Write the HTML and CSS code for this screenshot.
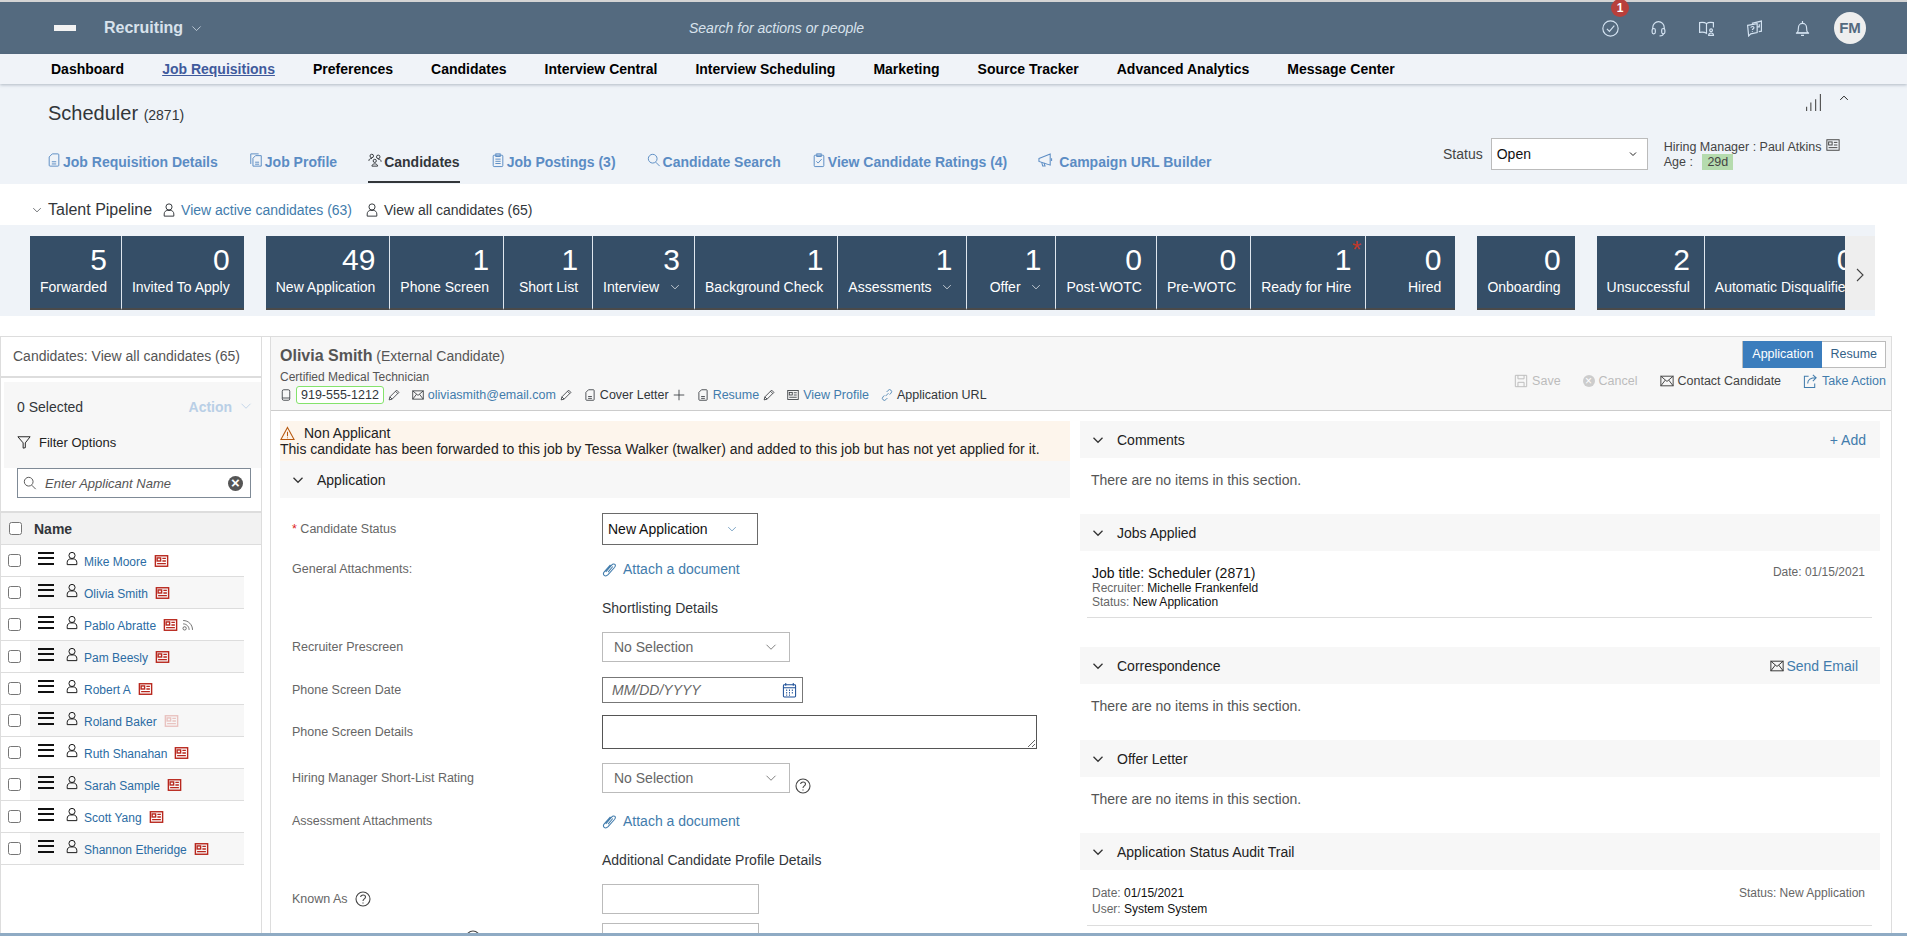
FILE: index.html
```html
<!DOCTYPE html>
<html lang="en">
<head>
    <meta charset="UTF-8">
    <meta name="viewport" content="width=device-width, initial-scale=1.0">
    <title>Recruiting - Scheduler</title>
    <link rel="stylesheet" href="styles.css">
</head>
<body>
    <svg class="sprite" xmlns="http://www.w3.org/2000/svg">
        <symbol id="i-chev" viewBox="0 0 16 16"><path d="M2 5l6 6 6-6"/></symbol>
        <symbol id="i-check" viewBox="0 0 16 16"><circle cx="8" cy="8" r="7.2"/><path d="M4.6 8.4l2.4 2.4 4.6-5.4"/></symbol>
        <symbol id="i-headset" viewBox="0 0 16 16"><path d="M2.6 9V7a5.4 5.4 0 0 1 10.8 0v2"/><rect x="2" y="8" width="3" height="5" rx="1.4"/><rect x="11" y="8" width="3" height="5" rx="1.4"/><path d="M12.5 13c0 1.4-1.2 2-3.5 2"/></symbol>
        <symbol id="i-book" viewBox="0 0 16 16"><path d="M8 3.4C6.6 2.2 4 2 1.5 2.4v9.2c2.400-.4 5 -.2 6.500 1V3.400zM8 3.400C9.400 2.200 12 2 14.500 2.400V7"/><circle cx="12.300" cy="9.700" r="1.300"/><path d="M10 14.500c0-3 4.600-3 4.600 0z"/></symbol>
        <symbol id="i-chat" viewBox="0 0 16 16"><path d="M5.500 3.200L14.500 1v9.500l-2.500.5"/><path d="M1.500 5l9-1.600v8.400L4.500 13l-2 2z"/><path d="M4.500 7.200c.4-1.400 3-1.400 3 0 0 1-1.500 1-1.500 2.200M6 10.700v.5M10.500 6.500h2M12.500 4v3"/></symbol>
        <symbol id="i-bell" viewBox="0 0 16 16"><path d="M3 12c1.200-1.400 1.200-3 1.200-5a3.800 3.800 0 0 1 7.600 0c0 2 0 3.600 1.200 5z"/><path d="M1.800 12.400h12.400M6.600 14.500h2.800M8 1v2"/></symbol>
        <symbol id="i-doc" viewBox="0 0 16 16"><path d="M6 1h6.500a1 1 0 0 1 1 1v12a1 1 0 0 1-1 1h-9a1 1 0 0 1-1-1V4.500z"/><path d="M5.500 10h5M5.500 12.500h5"/></symbol>
        <symbol id="i-docs" viewBox="0 0 16 16"><path d="M2 12.500V1h9"/><path d="M7.500 3h6.500v12H4.500V6z"/><path d="M7 10.500h4.500M7 12.800h4.500"/></symbol>
        <symbol id="i-people" viewBox="0 0 16 16"><circle cx="4.300" cy="3.400" r="2"/><circle cx="11.700" cy="4.400" r="2"/><circle cx="7.700" cy="9" r="1.800"/><path d="M1 9c0-2 1.500-2.800 3.500-2.800M15 10c0-2-1.200-3-3.500-3M4.500 15c0-3.500 6.500-3.500 6.500 0z"/></symbol>
        <symbol id="i-clip" viewBox="0 0 16 16"><rect x="2.500" y="2.500" width="11" height="13" rx="1"/><rect x="5.500" y="1" width="5" height="3"/><path d="M5 7h6M5 9.500h6M5 12h6"/></symbol>
        <symbol id="i-search" viewBox="0 0 16 16"><circle cx="6.500" cy="6.500" r="5"/><path d="M10 10.500l4.500 4.500"/></symbol>
        <symbol id="i-rate" viewBox="0 0 16 16"><rect x="2.500" y="2.500" width="11" height="13" rx="1"/><rect x="5.500" y="1" width="5" height="3"/><path d="M5 9.500l2 2 4-4.500"/></symbol>
        <symbol id="i-horn" viewBox="0 0 16 16"><path d="M1 6.500L13 1.500v12L1 9.500z"/><path d="M4 10.500l1 4h2.500l-1-3.400M14.500 6v3"/></symbol>
        <symbol id="i-person" viewBox="0 0 16 16"><circle cx="8" cy="4.500" r="3.500"/><path d="M2.500 15v-2.500c0-2.500 2-4 3.500-4h4c1.500 0 3.500 1.500 3.500 4V15z"/></symbol>
        <symbol id="i-bars" viewBox="0 0 16 16"><path d="M1.500 16v-4M5.500 16V8M10 16V5M14.500 16V0"/></symbol>
        <symbol id="i-card" viewBox="0 0 16 16"><rect x="1" y="2" width="14" height="12"/><rect x="3" y="4.500" width="4" height="3.500"/><path d="M9 5h4M9 8h4M3 11h10"/></symbol>
        <symbol id="i-filter" viewBox="0 0 16 16"><path d="M1 2h14L9.500 9v5.500L7 15V9z"/></symbol>
        <symbol id="i-phone" viewBox="0 0 16 16"><rect x="3" y="1" width="10" height="14" rx="2"/><path d="M3 12h10"/></symbol>
        <symbol id="i-pencil" viewBox="0 0 16 16"><path d="M1.500 14.500l1-4L11.500 1.500l3 3-9 9zM2.500 10.500l3 3M10 3l3 3"/></symbol>
        <symbol id="i-mail" viewBox="0 0 16 16"><rect x="1" y="2.500" width="14" height="11"/><path d="M1 2.500l7 6 7-6M1 13.500l5-6.500M15 13.500l-5-6.500"/></symbol>
        <symbol id="i-plus" viewBox="0 0 16 16"><path d="M8 1v14M1 8h14"/></symbol>
        <symbol id="i-link" viewBox="0 0 16 16"><path d="M6 9.500l4-4M7.500 4l2-2.200a2.500 2.500 0 0 1 4 3.500L11.500 7.500M8.500 12l-2 2.200a2.500 2.500 0 0 1-4-3.500L4.500 8.500"/></symbol>
        <symbol id="i-warn" viewBox="0 0 16 16"><path d="M8 1.500L15 14.500H1z"/><path d="M8 6v5M8 12.300v.8"/></symbol>
        <symbol id="i-attach" viewBox="0 0 16 16"><path d="M4 10.500l6.500-7.500c1-1.200 2.700-1.200 3.300-.5s.5 2.200-.5 3.400L6.500 13.500c-1.500 1.500-3.300 1.500-4.200.7s-1-2.500.3-4L9 3M6.500 10.800l5-6"/></symbol>
        <symbol id="i-cal" viewBox="0 0 16 16"><rect x="1.500" y="2.500" width="13" height="13" rx="1"/><path d="M1.500 5.500h13M4 .5v3M12 .5v3"/><path class="dots" d="M4.500 8.300h1M7.500 8.300h1M10.500 8.300h1M4.500 11h1M7.500 11h1M10.500 11h1M4.500 13.500h1M7.500 13.500h1"/></symbol>
        <symbol id="i-help" viewBox="0 0 16 16"><circle cx="8" cy="8" r="7"/><path d="M5.600 6c.3-2.700 4.900-2.700 4.900 0 0 1.900-2.500 1.800-2.500 4M8 11.500v1"/></symbol>
        <symbol id="i-save" viewBox="0 0 16 16"><path d="M1.500 1.500h13v13h-13z"/><path d="M4.500 1.500v4h7v-4M4.500 14.500v-5h7v5"/></symbol>
        <symbol id="i-share" viewBox="0 0 16 16"><path d="M6 2.500H1.500v12h11V10"/><path d="M5 10c0-4 3-6 9-6M10.500 1l3.500 3-3.500 3.500"/></symbol>
        <symbol id="i-rss" viewBox="0 0 16 16"><circle cx="3.500" cy="12.500" r="2.200"/><path d="M1.500 6.500c4.500 0 8 3.500 8 8M1.500 2c7 0 12.500 5.500 12.500 12.500"/></symbol>
    </svg>

    <header class="shell">
        <div class="brand">
            <span class="logo"></span>
            <span class="app-name">Recruiting</span>
            <svg class="ic chev-sm"><use href="#i-chev"/></svg>
        </div>
        <div class="shell-search">Search for actions or people</div>
        <div class="shell-icons">
            <span class="shell-ic">
                <svg class="ic"><use href="#i-check"/></svg>
                <span class="badge">1</span>
            </span>
            <span class="shell-ic"><svg class="ic"><use href="#i-headset"/></svg></span>
            <span class="shell-ic"><svg class="ic"><use href="#i-book"/></svg></span>
            <span class="shell-ic"><svg class="ic"><use href="#i-chat"/></svg></span>
            <span class="shell-ic"><svg class="ic"><use href="#i-bell"/></svg></span>
            <span class="avatar">FM</span>
        </div>
    </header>

    <nav class="topnav">
        <a>Dashboard</a>
        <a class="current">Job Requisitions</a>
        <a>Preferences</a>
        <a>Candidates</a>
        <a>Interview Central</a>
        <a>Interview Scheduling</a>
        <a>Marketing</a>
        <a>Source Tracker</a>
        <a>Advanced Analytics</a>
        <a>Message Center</a>
    </nav>

    <section class="job-head">
        <div class="job-title">
            <h1>Scheduler <small>(2871)</small></h1>
            <div class="job-tools">
                <svg class="ic"><use href="#i-bars"/></svg>
                <svg class="ic up"><use href="#i-chev"/></svg>
            </div>
        </div>
        <div class="tab-row">
            <a class="tab"><svg class="ic"><use href="#i-doc"/></svg>Job Requisition Details</a>
            <a class="tab"><svg class="ic"><use href="#i-docs"/></svg>Job Profile</a>
            <a class="tab active"><svg class="ic"><use href="#i-people"/></svg>Candidates</a>
            <a class="tab"><svg class="ic"><use href="#i-clip"/></svg>Job Postings (3)</a>
            <a class="tab"><svg class="ic"><use href="#i-search"/></svg>Candidate Search</a>
            <a class="tab"><svg class="ic"><use href="#i-rate"/></svg>View Candidate Ratings (4)</a>
            <a class="tab"><svg class="ic wide"><use href="#i-horn"/></svg>Campaign URL Builder</a>
            <div class="job-meta">
                <span class="status-label">Status</span>
                <div class="select status-select">Open<svg class="ic"><use href="#i-chev"/></svg></div>
                <div class="hiring">
                    <div>Hiring Manager : Paul Atkins <svg class="ic"><use href="#i-card"/></svg></div>
                    <div>Age : <span class="age">29d</span></div>
                </div>
            </div>
        </div>
    </section>

    <div class="pipeline-links">
        <svg class="ic pipe-chev"><use href="#i-chev"/></svg>
        <span class="pipe-title">Talent Pipeline</span>
        <svg class="ic"><use href="#i-person"/></svg>
        <a class="blue">View active candidates (63)</a>
        <svg class="ic second"><use href="#i-person"/></svg>
        <span>View all candidates (65)</span>
    </div>

    <section class="pipeline">
        <div class="pipe-scroll">
            <div class="tiles">
                <div class="tile"><b>5</b><span>Forwarded</span></div>
                <div class="tile"><b>0</b><span>Invited To Apply</span></div>
            </div>
            <div class="tiles">
                <div class="tile"><b>49</b><span>New Application</span></div>
                <div class="tile"><b>1</b><span>Phone Screen</span></div>
                <div class="tile"><b>1</b><span>Short List</span></div>
                <div class="tile"><b>3</b><span>Interview <svg class="ic"><use href="#i-chev"/></svg></span></div>
                <div class="tile"><b>1</b><span>Background Check</span></div>
                <div class="tile"><b>1</b><span>Assessments <svg class="ic"><use href="#i-chev"/></svg></span></div>
                <div class="tile"><b>1</b><span>Offer <svg class="ic"><use href="#i-chev"/></svg></span></div>
                <div class="tile"><b>0</b><span>Post-WOTC</span></div>
                <div class="tile"><b>0</b><span>Pre-WOTC</span></div>
                <div class="tile"><b>1</b><i class="star">*</i><span>Ready for Hire</span></div>
                <div class="tile"><b>0</b><span>Hired</span></div>
            </div>
            <div class="tiles">
                <div class="tile"><b>0</b><span>Onboarding</span></div>
            </div>
            <div class="tiles">
                <div class="tile"><b>2</b><span>Unsuccessful</span></div>
                <div class="tile"><b>0</b><span>Automatic Disqualified</span></div>
                <div class="tile"><b>0</b><span>Rejected</span></div>
            </div>
        </div>
        <button class="pipe-next"><svg class="ic"><use href="#i-chev"/></svg></button>
    </section>

    <main class="workspace">
        <aside class="cand-list">
            <div class="cand-head">Candidates: View all candidates (65)</div>
            <div class="cand-tools">
                <div class="cand-sel">
                    <span>0 Selected</span>
                    <span class="action">Action <svg class="ic"><use href="#i-chev"/></svg></span>
                </div>
                <div class="cand-filter"><svg class="ic"><use href="#i-filter"/></svg>Filter Options</div>
            </div>
            <div class="cand-search">
                <svg class="ic"><use href="#i-search"/></svg>
                <span>Enter Applicant Name</span>
                <span class="clear">&times;</span>
            </div>
            <div class="cand-th"><input type="checkbox"><span>Name</span></div>
            <div class="cand-row"><input type="checkbox"><div class="cand-cell"><span class="burger"></span><svg class="ic"><use href="#i-person"/></svg><a>Mike Moore</a><svg class="ic res"><use href="#i-card"/></svg></div></div>
            <div class="cand-row"><input type="checkbox"><div class="cand-cell"><span class="burger"></span><svg class="ic"><use href="#i-person"/></svg><a>Olivia Smith</a><svg class="ic res"><use href="#i-card"/></svg></div></div>
            <div class="cand-row"><input type="checkbox"><div class="cand-cell"><span class="burger"></span><svg class="ic"><use href="#i-person"/></svg><a>Pablo Abratte</a><svg class="ic res"><use href="#i-card"/></svg><svg class="ic rss"><use href="#i-rss"/></svg></div></div>
            <div class="cand-row"><input type="checkbox"><div class="cand-cell"><span class="burger"></span><svg class="ic"><use href="#i-person"/></svg><a>Pam Beesly</a><svg class="ic res"><use href="#i-card"/></svg></div></div>
            <div class="cand-row"><input type="checkbox"><div class="cand-cell"><span class="burger"></span><svg class="ic"><use href="#i-person"/></svg><a>Robert A</a><svg class="ic res"><use href="#i-card"/></svg></div></div>
            <div class="cand-row"><input type="checkbox"><div class="cand-cell"><span class="burger"></span><svg class="ic"><use href="#i-person"/></svg><a>Roland Baker</a><svg class="ic res faded"><use href="#i-card"/></svg></div></div>
            <div class="cand-row"><input type="checkbox"><div class="cand-cell"><span class="burger"></span><svg class="ic"><use href="#i-person"/></svg><a>Ruth Shanahan</a><svg class="ic res"><use href="#i-card"/></svg></div></div>
            <div class="cand-row"><input type="checkbox"><div class="cand-cell"><span class="burger"></span><svg class="ic"><use href="#i-person"/></svg><a>Sarah Sample</a><svg class="ic res"><use href="#i-card"/></svg></div></div>
            <div class="cand-row"><input type="checkbox"><div class="cand-cell"><span class="burger"></span><svg class="ic"><use href="#i-person"/></svg><a>Scott Yang</a><svg class="ic res"><use href="#i-card"/></svg></div></div>
            <div class="cand-row"><input type="checkbox"><div class="cand-cell"><span class="burger"></span><svg class="ic"><use href="#i-person"/></svg><a>Shannon Etheridge</a><svg class="ic res"><use href="#i-card"/></svg></div></div>
        </aside>

        <section class="detail">
            <div class="detail-head">
                <div class="who">
                    <div class="who-name"><b>Olivia Smith</b> (External Candidate)</div>
                    <div class="who-job">Certified Medical Technician</div>
                    <div class="who-links">
                        <svg class="ic"><use href="#i-phone"/></svg>
                        <span class="phone">919-555-1212</span>
                        <svg class="ic"><use href="#i-pencil"/></svg>
                        <svg class="ic gap-l"><use href="#i-mail"/></svg>
                        <a class="blue">oliviasmith@email.com</a>
                        <svg class="ic"><use href="#i-pencil"/></svg>
                        <svg class="ic gap-l"><use href="#i-doc"/></svg>
                        <span>Cover Letter</span>
                        <svg class="ic"><use href="#i-plus"/></svg>
                        <svg class="ic gap-l"><use href="#i-doc"/></svg>
                        <a class="blue">Resume</a>
                        <svg class="ic"><use href="#i-pencil"/></svg>
                        <svg class="ic gap-l"><use href="#i-card"/></svg>
                        <a class="blue">View Profile</a>
                        <svg class="ic gap-l blue"><use href="#i-link"/></svg>
                        <span>Application URL</span>
                    </div>
                </div>
                <div class="detail-actions">
                    <div class="toggle"><span class="on">Application</span><span>Resume</span></div>
                    <div class="toolbar">
                        <span class="off"><svg class="ic"><use href="#i-save"/></svg>Save</span>
                        <span class="off"><span class="off-x">&times;</span>Cancel</span>
                        <span><svg class="ic"><use href="#i-mail"/></svg>Contact Candidate</span>
                        <a class="blue"><svg class="ic big"><use href="#i-share"/></svg>Take Action</a>
                    </div>
                </div>
            </div>

            <div class="detail-body">
                <div class="app-col">
                    <div class="notice">
                        <div class="notice-title"><svg class="ic"><use href="#i-warn"/></svg>Non Applicant</div>
                        <div>This candidate has been forwarded to this job by Tessa Walker (twalker) and added to this job but has not yet applied for it.</div>
                    </div>
                    <div class="sec-head"><svg class="ic"><use href="#i-chev"/></svg>Application</div>
                    <div class="form">
                        <div class="frow r-status">
                            <label><i>*</i> Candidate Status</label>
                            <div class="select dark">New Application<svg class="ic blue"><use href="#i-chev"/></svg></div>
                        </div>
                        <div class="frow r-attach">
                            <label>General Attachments:</label>
                            <a class="attach"><svg class="ic"><use href="#i-attach"/></svg>Attach a document</a>
                        </div>
                        <div class="frow r-sub"><label></label><span class="sub">Shortlisting Details</span></div>
                        <div class="frow r-sel1">
                            <label>Recruiter Prescreen</label>
                            <div class="select none">No Selection<svg class="ic"><use href="#i-chev"/></svg></div>
                        </div>
                        <div class="frow r-date">
                            <label>Phone Screen Date</label>
                            <div class="date-box"><span>MM/DD/YYYY</span><svg class="ic"><use href="#i-cal"/></svg></div>
                        </div>
                        <div class="frow r-text">
                            <label>Phone Screen Details</label>
                            <textarea></textarea>
                        </div>
                        <div class="frow r-sel2">
                            <label>Hiring Manager Short-List Rating</label>
                            <div class="select none">No Selection<svg class="ic"><use href="#i-chev"/></svg></div>
                            <svg class="ic help drop"><use href="#i-help"/></svg>
                        </div>
                        <div class="frow r-attach2">
                            <label>Assessment Attachments</label>
                            <a class="attach"><svg class="ic"><use href="#i-attach"/></svg>Attach a document</a>
                        </div>
                        <div class="frow r-sub2"><label></label><span class="sub">Additional Candidate Profile Details</span></div>
                        <div class="frow r-known">
                            <label>Known As <svg class="ic help"><use href="#i-help"/></svg></label>
                            <input type="text" class="plain">
                        </div>
                        <div class="frow r-other">
                            <label>If Other State (please specify) <svg class="ic help"><use href="#i-help"/></svg></label>
                            <input type="text" class="plain">
                        </div>
                    </div>
                </div>

                <div class="side-col">
                    <div class="sec-head"><svg class="ic"><use href="#i-chev"/></svg>Comments<a class="sec-link">+ Add</a></div>
                    <p class="empty">There are no items in this section.</p>
                    <div class="sec-head"><svg class="ic"><use href="#i-chev"/></svg>Jobs Applied</div>
                    <div class="job-entry">
                        <div class="entry-main">
                            <div class="entry-title">Job title: Scheduler (2871)</div>
                            <div><em>Recruiter:</em> Michelle Frankenfeld</div>
                            <div><em>Status:</em> New Application</div>
                        </div>
                        <em>Date: 01/15/2021</em>
                    </div>
                    <div class="sec-head"><svg class="ic"><use href="#i-chev"/></svg>Correspondence<a class="sec-link send"><svg class="ic"><use href="#i-mail"/></svg>Send Email</a></div>
                    <p class="empty">There are no items in this section.</p>
                    <div class="sec-head"><svg class="ic"><use href="#i-chev"/></svg>Offer Letter</div>
                    <p class="empty">There are no items in this section.</p>
                    <div class="sec-head"><svg class="ic"><use href="#i-chev"/></svg>Application Status Audit Trail</div>
                    <div class="audit-entry">
                        <div class="entry-main">
                            <div><em>Date:</em> 01/15/2021</div>
                            <div><em>User:</em> System System</div>
                        </div>
                        <em>Status: New Application</em>
                    </div>
                </div>
            </div>
        </section>
    </main>
    <div class="edge"></div>
</body>
</html>
```

FILE: styles.css
```css
* {
    box-sizing: border-box;
}
html, body {
    height: 936px;
    overflow: hidden;
}
body {
    margin: 0;
    background-color: #fff;
    color: #32363a;
    font-family: "Liberation Sans", Arial, sans-serif;
    font-size: 14px;
    position: relative;
}
a {
    text-decoration: none;
}
.sprite {
    display: none;
}
.ic {
    width: 14px;
    height: 14px;
    fill: none;
    stroke: currentColor;
    stroke-width: 1.1;
    flex: none;
}
.blue {
    color: #427cac;
}

/* shell bar */
.shell {
    height: 54px;
    border-top: 2px solid #d4d4d4;
    background-color: #546a7f;
    display: flex;
    align-items: center;
    color: #d8e2ec;
}
.brand {
    width: 689px;
    padding-left: 54px;
    display: flex;
    align-items: center;
}
.logo {
    width: 22px;
    height: 6px;
    background-color: #f2f2f2;
    margin-right: 28px;
}
.app-name {
    font-size: 16px;
    font-weight: bold;
}
.chev-sm {
    width: 11px;
    height: 11px;
    margin-left: 8px;
}
.shell-search {
    font-size: 14px;
    font-style: italic;
}
.shell-icons {
    margin-left: auto;
    padding-right: 41px;
    display: flex;
    align-items: center;
}
.shell-ic {
    width: 48px;
    display: flex;
    justify-content: center;
    position: relative;
    color: #d4e3f2;
}
.shell-ic .ic {
    width: 17px;
    height: 17px;
}
.badge {
    position: absolute;
    left: 25px;
    top: -21px;
    width: 18px;
    height: 18px;
    border-radius: 50%;
    background-color: #b8403c;
    color: #fff;
    font-size: 12px;
    font-weight: bold;
    line-height: 18px;
    text-align: center;
}
.avatar {
    width: 32px;
    height: 32px;
    margin-left: 8px;
    border-radius: 50%;
    background-color: #eeeeee;
    color: #546a7f;
    font-weight: bold;
    font-size: 15px;
    line-height: 32px;
    text-align: center;
}

/* main nav */
.topnav {
    height: 30px;
    padding-left: 51px;
    display: flex;
    gap: 38px;
    align-items: center;
    background-color: #f0f3f8;
    box-shadow: 0 1px 3px rgba(60, 80, 100, 0.35);
    position: relative;
    font-weight: bold;
    color: #000;
}
.topnav .current {
    color: #3f5a9c;
    text-decoration: underline;
}

/* job header */
.job-head {
    height: 100px;
    background-color: #eff3f8;
}
.job-title {
    height: 58px;
    padding-left: 48px;
    display: flex;
    align-items: center;
    position: relative;
}
.job-title h1 {
    margin: 0;
    font-size: 20px;
    font-weight: normal;
    color: #32363a;
}
.job-title small {
    font-size: 14px;
}
.job-tools {
    position: absolute;
    left: 1805px;
    top: 10px;
    display: flex;
    gap: 14px;
    color: #555;
}
.job-tools .ic {
    width: 17px;
    height: 17px;
}
.job-tools .up {
    width: 16px;
    height: 10px;
    margin-top: -1px;
    transform: scaleY(-1);
    stroke-width: 1.6;
    color: #222;
}
.tab-row {
    height: 42px;
    padding-left: 47px;
    display: flex;
    gap: 31px;
    align-items: flex-start;
}
.tab {
    height: 41px;
    display: flex;
    align-items: center;
    gap: 2px;
    color: #5b8cc4;
    font-weight: bold;
    border-bottom: 2px solid transparent;
}
.tab .ic {
    width: 14px;
    height: 16px;
    margin-top: -3px;
}
.tab .wide {
    width: 15px;
    margin-right: 4px;
}
.tab.active {
    color: #32363a;
    border-bottom-color: #32363a;
}
.job-meta {
    position: absolute;
    left: 1443px;
    top: 138px;
    display: flex;
    align-items: flex-start;
}
.status-label {
    margin: 8px 8px 0 0;
    color: #444;
}
.select {
    height: 30px;
    display: flex;
    align-items: center;
    justify-content: space-between;
    background-color: #fff;
    border: 1px solid #bbb;
    color: #555;
}
.select .ic {
    width: 12px;
    height: 12px;
}
.status-select {
    width: 157px;
    height: 32px;
    padding: 0 10px 0 5px;
    color: #111;
}
.status-select .ic {
    width: 8px;
    height: 8px;
    stroke-width: 2;
    color: #222;
}
.hiring {
    margin-left: 16px;
    font-size: 12.5px;
    line-height: 15px;
    color: #444;
}
.hiring .ic {
    width: 16px;
    height: 14px;
    vertical-align: -1px;
}
.age {
    background-color: #b5dbae;
    padding: 1px 5px;
    margin-left: 6px;
}

/* pipeline */
.pipeline-links {
    height: 41px;
    padding: 10px 0 0 32px;
    display: flex;
    align-items: center;
    gap: 5px;
    font-size: 14px;
}
.pipeline-links .pipe-chev {
    width: 10px;
    height: 10px;
    margin-right: 1px;
}
.pipe-title {
    font-size: 16px;
    margin-right: 5px;
}
.pipeline-links .second {
    margin-left: 8px;
}
.pipeline {
    width: 1875px;
    height: 91px;
    padding: 11px 0 6px 30px;
    background-color: #eff3f8;
    display: flex;
}
.pipe-scroll {
    width: 1815px;
    display: flex;
    gap: 22px;
    overflow: hidden;
}
.tiles {
    display: flex;
    flex: none;
}
.tile {
    min-width: 89px;
    padding: 7px 14px 0 10px;
    background-color: #354e67;
    border-right: 1px solid #dfe6ee;
    border-bottom: 2px solid #4a4a4a;
    color: #fff;
    text-align: right;
    position: relative;
}
.tile:last-child {
    border-right: 0;
}
.tile b {
    display: block;
    font-size: 30px;
    font-weight: normal;
    line-height: 34px;
}
.tile span {
    display: block;
    margin-top: 2px;
    white-space: nowrap;
    text-align: right;
}
.tile .ic {
    width: 10px;
    height: 10px;
    margin-left: 7px;
}
.star {
    position: absolute;
    top: 0;
    right: 4px;
    color: #c0392b;
    font-size: 24px;
    font-style: normal;
}
.pipe-next {
    width: 30px;
    padding: 0;
    border: 0;
    background-color: #eeeeee;
    color: #444;
}
.pipe-next .ic {
    width: 16px;
    height: 16px;
    transform: rotate(-90deg);
    margin-top: 6px;
}

/* workspace */
.workspace {
    margin-top: 20px;
    height: 598px;
    width: 1892px;
    display: flex;
    border-top: 1px solid #ddd;
    overflow: hidden;
}
.cand-list {
    width: 262px;
    flex: none;
    border-left: 1px solid #ddd;
    border-right: 1px solid #ddd;
}
.cand-head {
    height: 41px;
    padding: 11px 0 0 12px;
    color: #555;
    border-bottom: 2px solid #ddd;
}
.cand-tools {
    height: 86px;
    margin: 4px 0 0 3px;
    padding: 0 9px 0 13px;
    background-color: #f7f7f7;
}
.cand-sel {
    height: 50px;
    display: flex;
    align-items: center;
    justify-content: space-between;
}
.action {
    color: #b9cfe6;
    font-weight: bold;
}
.action .ic {
    width: 12px;
    height: 12px;
    margin-left: 4px;
}
.cand-filter {
    height: 20px;
    display: flex;
    align-items: center;
    gap: 8px;
    font-size: 13px;
    color: #222;
}
.cand-search {
    width: 234px;
    height: 30px;
    margin-left: 16px;
    padding: 0 7px 0 5px;
    display: flex;
    align-items: center;
    gap: 8px;
    border: 1px solid #7f8a96;
    font-size: 13px;
    font-style: italic;
    color: #555;
}
.clear {
    width: 15px;
    height: 15px;
    margin-left: auto;
    border-radius: 50%;
    background-color: #555;
    color: #fff;
    font-size: 15px;
    font-style: normal;
    font-weight: bold;
    line-height: 14px;
    text-align: center;
}
.cand-th {
    height: 34px;
    margin-top: 13px;
    padding-left: 8px;
    display: flex;
    align-items: center;
    background-color: #f2f2f2;
    border-top: 2px solid #ddd;
    border-bottom: 1px solid #ddd;
    font-weight: bold;
}
.cand-th span {
    margin-left: 12px;
}
input[type="checkbox"] {
    width: 13px;
    height: 13px;
    margin: 0;
    flex: none;
}
.cand-row {
    width: 243px;
    height: 32px;
    padding-left: 7px;
    display: flex;
    align-items: center;
    border-bottom: 1px solid #ddd;
}
.cand-cell {
    height: 31px;
    margin-left: 9px;
    padding-left: 8px;
    flex: 1;
    display: flex;
    align-items: center;
    font-size: 12px;
}
.cand-row:nth-child(odd) .cand-cell {
    background-color: #f7f7f7;
}
.cand-row:nth-child(odd) input + .cand-cell {
    background-color: transparent;
}
.cand-row:nth-child(even) .cand-cell {
    background-color: #f7f7f7;
}
.burger {
    width: 16px;
    height: 13px;
    margin: -4px 11px 0 0;
    border-top: 2.5px solid #111;
    border-bottom: 2.5px solid #111;
    position: relative;
    flex: none;
}
.burger::after {
    content: "";
    position: absolute;
    left: 0;
    right: 0;
    top: 2.7px;
    height: 2.5px;
    background-color: #111;
}
.cand-cell .ic {
    width: 14px;
    height: 17px;
    margin-top: -4px;
    color: #111;
}
.cand-cell a {
    color: #2b6ca3;
    margin-left: 5px;
    padding-top: 2px;
}
.cand-cell .res {
    width: 15px;
    height: 14px;
    margin: 0 0 0 7px;
    color: #b8271d;
    stroke-width: 1.6;
}
.cand-cell .faded {
    color: #e9c3c0;
}
.cand-cell .rss {
    width: 12px;
    height: 12px;
    margin: 0 0 0 4px;
    color: #555;
}

/* candidate detail */
.detail {
    margin-left: 8px;
    flex: 1;
    border-left: 1px solid #ddd;
    border-right: 1px solid #ddd;
    min-width: 0;
}
.detail-head {
    height: 74px;
    padding: 0 5px 0 9px;
    display: flex;
    justify-content: space-between;
    background-color: #f7f7f7;
    border-bottom: 1px solid #ccc;
    font-size: 12.5px;
}
.who-name {
    margin-top: 10px;
    font-size: 14px;
    line-height: 18px;
    color: #555;
}
.who-name b {
    font-size: 16px;
}
.who-job {
    margin-top: 5px;
    font-size: 12px;
    line-height: 14px;
    color: #555;
}
.who-links {
    height: 18px;
    margin-top: 2px;
    display: flex;
    align-items: center;
    gap: 4px;
    color: #32363a;
}
.who-links .ic {
    width: 12px;
    height: 14px;
}
.who-links .gap-l {
    margin-left: 8px;
}
.phone {
    padding: 1px 4px;
    border: 1px solid #84e36c;
    border-radius: 3px;
    background-color: #fff;
}
.detail-actions {
    display: flex;
    flex-direction: column;
    align-items: flex-end;
}
.toggle {
    margin-top: 4px;
    display: flex;
    height: 27px;
    margin-right: 0;
    border: 1px solid #bbb;
    background-color: #fff;
    color: #346187;
}
.toggle span {
    padding: 0 8px;
    line-height: 25px;
}
.toggle .on {
    margin: -1px 0;
    padding: 0 9px;
    line-height: 26px;
    background-color: #3b7dbd;
    color: #fff;
}
.toolbar {
    margin-top: 5px;
    padding-right: 0;
    height: 16px;
    display: flex;
    align-items: center;
    gap: 22px;
    color: #444;
}
.toolbar span, .toolbar a {
    display: flex;
    align-items: center;
    gap: 4px;
}
.toolbar .off {
    color: #bcbcbc;
}
.off-x {
    width: 12px;
    height: 12px;
    border-radius: 50%;
    background-color: #ccc;
    color: #fff;
    font-size: 12px;
    line-height: 12px;
    justify-content: center;
}
.toolbar .big {
    width: 15px;
    height: 15px;
}
.detail-body {
    padding: 10px 10px 0 9px;
    display: flex;
    gap: 10px;
}
.app-col {
    width: 790px;
    flex: none;
}
.side-col {
    width: 800px;
    flex: none;
}
.notice {
    height: 40px;
    background-color: #fdf5ec;
    line-height: 16px;
    padding-top: 4px;
    color: #222;
}
.notice-title {
    display: flex;
    align-items: center;
    gap: 9px;
}
.notice-title .ic {
    width: 15px;
    height: 15px;
    color: #b8590f;
}
.sec-head {
    height: 37px;
    padding: 0 14px 0 12px;
    display: flex;
    align-items: center;
    background-color: #f7f7f7;
    color: #222;
}
.sec-head > .ic {
    width: 12px;
    height: 12px;
    margin-right: 13px;
    stroke-width: 1.7;
    color: #333;
}
.sec-link {
    margin-left: auto;
    color: #427cac;
    display: flex;
    align-items: center;
    gap: 2px;
}
.send {
    margin-right: 8px;
}
.send .ic {
    width: 14px;
    height: 14px;
    color: #333;
}
.form {
    padding: 15px 0 0 12px;
}
.frow {
    display: grid;
    grid-template-columns: 310px auto 1fr;
    align-items: center;
    font-size: 12.5px;
}
.frow label {
    color: #666;
}
.frow label i {
    color: #d22;
    font-style: normal;
}
.frow .select {
    width: 188px;
    padding: 0 12px 0 11px;
    font-size: 14px;
}
.frow .select.none {
    color: #666;
}
.r-status .select.dark {
    width: 156px;
    height: 32px;
    padding: 0 20px 0 5px;
    border-color: #6a6a6a;
    color: #111;
}
.r-status .ic {
    width: 10px;
    height: 10px;
}
.r-attach {
    margin-top: 14px;
    height: 20px;
}
.r-sub {
    margin-top: 19px;
    height: 20px;
}
.r-sel1 {
    margin-top: 14px;
}
.r-date {
    margin-top: 15px;
}
.r-text {
    margin-top: 12px;
}
.r-sel2 {
    margin-top: 12px;
}
.r-attach2 {
    margin-top: 17px;
    height: 20px;
}
.r-sub2 {
    margin-top: 19px;
    height: 20px;
}
.r-known {
    margin-top: 14px;
}
.r-other {
    margin-top: 9px;
}
.attach {
    display: flex;
    align-items: center;
    gap: 6px;
    color: #427cac;
    font-size: 14px;
}
.attach .ic {
    width: 15px;
    height: 15px;
}
.sub {
    font-size: 14px;
    color: #32363a;
}
.date-box {
    width: 201px;
    height: 26px;
    padding: 0 5px 0 9px;
    display: flex;
    align-items: center;
    justify-content: space-between;
    border: 1px solid #777;
    font-size: 14px;
    font-style: italic;
    color: #666;
}
.date-box .ic {
    width: 15px;
    height: 16px;
    color: #1d4f98;
}
.dots {
    stroke-width: 1.5;
}
textarea {
    width: 435px;
    height: 34px;
    border: 1px solid #555;
    border-radius: 0;
    margin: 0;
    display: block;
}
.help {
    width: 16px;
    height: 16px;
    color: #444;
    vertical-align: -4px;
    margin-left: 4px;
}
.drop {
    margin: 17px 0 0 5px;
}
.plain {
    width: 157px;
    height: 30px;
    margin: 0;
    border: 1px solid #bbb;
    display: block;
}
.empty {
    height: 56px;
    margin: 0;
    padding: 14px 0 0 11px;
    color: #555;
}
.job-entry, .audit-entry {
    height: 67px;
    margin: 0 8px 29px 7px;
    padding: 14px 7px 0 5px;
    display: flex;
    justify-content: space-between;
    border-bottom: 1px solid #ddd;
    font-size: 12px;
    line-height: 14px;
    color: #111;
}
.audit-entry {
    height: 56px;
    margin-bottom: 0;
    padding-top: 15px;
    line-height: 16px;
}
.entry-title {
    font-size: 14px;
    line-height: 16px;
}
.job-entry em, .audit-entry em {
    font-style: normal;
    color: #666;
}
.edge {
    position: absolute;
    left: 0;
    right: 0;
    bottom: 0;
    height: 3px;
    background-color: #8fabc4;
}
```
